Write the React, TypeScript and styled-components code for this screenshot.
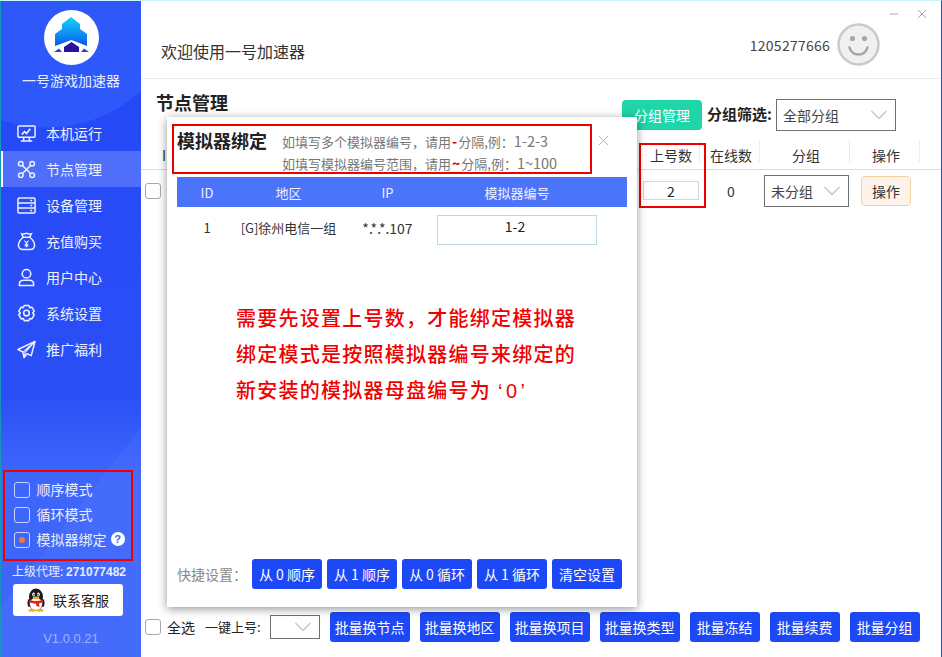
import React from "react";
import styled, { createGlobalStyle } from "styled-components";

const Global = createGlobalStyle`
  html, body { margin: 0; padding: 0; background: #fff; }
  * { box-sizing: border-box; }
  body { font-family: "Noto Sans CJK SC", "Liberation Sans", sans-serif; font-size: 14px; color: #333; }
`;

const Shell = styled.div`
  position: relative;
  width: 942px;
  height: 657px;
  overflow: hidden;
  display: flex;
  background: #fff;
  border-top: 1px solid #c9f5fb;
  border-right: 1px solid #2c5aa0;
`;

const Sidebar = styled.aside`
  width: 141px;
  flex: none;
  display: flex;
  flex-direction: column;
  align-items: center;
  color: #fff;
  border-left: 1px solid #1298b8;
  background:
    linear-gradient(128deg, transparent 0 72.5%, rgba(255,255,255,0.035) 72.6%),
    radial-gradient(circle at 46px -12px, #2f58fb 0 138px, transparent 139px),
    linear-gradient(180deg, #2447f6 0%, #2b4ff6 60%, #3e66fb 72%, #3e66fb 100%);
`;

const LogoCircle = styled.div`
  width: 55px;
  height: 55px;
  margin-top: 9px;
  border-radius: 50%;
  background: #fff;
  display: flex;
`;

const Brand = styled.div`
  margin-top: 5px;
  font-size: 14px;
  line-height: 20px;
  color: #e8edff;
`;

const Nav = styled.nav`
  width: 100%;
  margin-top: 25px;
  display: flex;
  flex-direction: column;
`;

const NavItem = styled.div<{ $active?: boolean }>`
  height: 36px;
  display: flex;
  align-items: center;
  gap: 10px;
  padding-left: ${(p) => (p.$active ? "14px" : "16px")};
  font-size: 14px;
  color: #eef1ff;
  background: ${(p) => (p.$active ? "#4f6ffb" : "transparent")};
  border-left: ${(p) => (p.$active ? "2px solid #fff" : "none")};
  svg { width: 19px; height: 19px; flex: none; }
`;

const ModeBox = styled.div`
  margin-top: auto;
  margin-left: -7px;
  width: 130px;
  height: 91px;
  border: 2px solid #ee0000;
  padding: 6px 0 0 9px;
  display: flex;
  flex-direction: column;
  gap: 3px;
`;

const ModeRow = styled.label`
  height: 22px;
  display: flex;
  align-items: center;
  gap: 7px;
  font-size: 14px;
  color: #eaeeff;
  white-space: nowrap;
  span:first-child { margin-top: 2px; }
`;

const ModeCheck = styled.span<{ $on?: boolean }>`
  width: 16px;
  height: 16px;
  border: 1px solid #c9d4ff;
  border-radius: 3px;
  display: flex;
  align-items: center;
  justify-content: center;
  &::after {
    content: "";
    display: ${(p) => (p.$on ? "block" : "none")};
    width: 6px;
    height: 6px;
    border-radius: 50%;
    background: #f7772a;
  }
`;

const Help = styled.span`
  width: 14px;
  height: 14px;
  margin-left: -3px;
  border-radius: 50%;
  background: #fff;
  color: #3e66fb;
  font: bold 11px/14px "Liberation Sans", sans-serif;
  text-align: center;
`;

const Agent = styled.div`
  margin-top: 0;
  margin-left: -4px;
  height: 20px;
  font-size: 12px;
  line-height: 20px;
  color: #e8edff;
  white-space: nowrap;
  b { font-family: "Liberation Sans", sans-serif; font-size: 12px; }
`;

const ServiceButton = styled.button`
  width: 110px;
  height: 32px;
  margin: 3px 0 0 -7px;
  border: none;
  border-radius: 3px;
  background: #fff;
  color: #222;
  font: 14px "Noto Sans CJK SC", sans-serif;
  display: flex;
  align-items: center;
  justify-content: center;
  gap: 7px;
  padding: 0;
`;

const Version = styled.div`
  margin: 15px 0 10px;
  font: 13px/16px "Liberation Sans", sans-serif;
  color: #9fb2fb;
`;

const Main = styled.main`
  flex: 1;
  min-width: 0;
  display: flex;
  flex-direction: column;
`;

const Header = styled.header`
  height: 78px;
  flex: none;
  border-bottom: 1px solid #ececec;
  display: flex;
  align-items: flex-start;
  padding-left: 20px;
`;

const Welcome = styled.div`
  margin-top: 39px;
  font-size: 16px;
  line-height: 22px;
  color: #333;
`;

const Account = styled.div`
  margin-left: auto;
  margin-top: 22px;
  display: flex;
  align-items: center;
  gap: 7px;
  font-size: 14px;
  color: #444;
  letter-spacing: 0.25px;
`;

const WindowControls = styled.div`
  width: 61px;
  margin-top: 8px;
  display: flex;
  gap: 18px;
  padding-left: 9px;
  svg { width: 10px; height: 10px; }
`;

const Toolbar = styled.div`
  height: 61px;
  flex: none;
  display: flex;
  align-items: flex-start;
  padding-left: 15px;
`;

const PageTitle = styled.h1`
  margin: 11px 0 0;
  font-size: 18px;
  line-height: 24px;
  font-weight: 700;
  color: #222;
`;

const GreenButton = styled.button`
  width: 80px;
  height: 30px;
  margin: 21px 0 0 auto;
  border: none;
  border-radius: 4px;
  background: #1ed6a8;
  color: #fff;
  font: 14px "Noto Sans CJK SC", sans-serif;
`;

const FilterLabel = styled.span`
  margin: 21px 4px 0 5px;
  font-size: 15px;
  line-height: 28px;
  font-weight: 700;
  color: #222;
  white-space: nowrap;
`;

const SelectBox = styled.div<{ $w: number; $h: number }>`
  width: ${(p) => p.$w}px;
  height: ${(p) => p.$h}px;
  border: 1px solid #707070;
  background: #fff;
  display: flex;
  align-items: center;
  justify-content: space-between;
  padding: 0 7px 0 6px;
  font-size: 14px;
  color: #444;
  flex: none;
  svg { width: 18px; height: 10px; margin-left: auto; }
`;

const FilterSelect = styled(SelectBox)`
  margin-top: 20px;
  margin-right: 45px;
`;

const TableGrid = styled.div`
  display: grid;
  grid-template-columns: 499px 60px 60px 90px 70px 1fr;
  align-items: center;
`;

const HeadRow = styled(TableGrid)`
  height: 30px;
  border-bottom: 1px solid #dcdcdc;
  align-items: stretch;
`;

const HeadCell = styled.div<{ $sep?: boolean; $start?: boolean }>`
  position: relative;
  display: flex;
  align-items: center;
  justify-content: ${(p) => (p.$start ? "flex-start" : "center")};
  padding-left: ${(p) => (p.$start ? "21px" : "2px")};
  font-size: 14px;
  color: #333;
  &::after {
    content: "";
    display: ${(p) => (p.$sep ? "block" : "none")};
    position: absolute;
    right: 0;
    top: 0;
    height: 22px;
    width: 1px;
    background: #ececec;
  }
`;

const BodyRow = styled(TableGrid)`
  height: 41px;
  position: relative;
`;

const RowStart = styled.div`
  padding-left: 4px;
  display: flex;
`;

const Check = styled.span`
  width: 16px;
  height: 16px;
  border: 1px solid #a8a8a8;
  border-radius: 3px;
  background: #fff;
  flex: none;
`;

const NumberInput = styled.div`
  width: 56px;
  height: 19px;
  margin: 0 auto 0 3px;
  border: 1px solid #c5dbe6;
  text-align: center;
  font-size: 14px;
  line-height: 18px;
  color: #222;
`;

const CellText = styled.div`
  text-align: center;
  font-size: 14px;
  color: #333;
  padding-left: 2px;
`;

const RowSelect = styled(SelectBox)`
  margin-left: 4px;
`;

const OpButton = styled.button`
  width: 50px;
  height: 30px;
  margin-left: 11px;
  border: 1px solid #f3cf9c;
  border-radius: 4px;
  background: #fdf3ea;
  color: #333;
  font: 14px "Noto Sans CJK SC", sans-serif;
  padding: 0;
`;

const CountMarker = styled.div`
  position: absolute;
  left: 639px;
  top: 142px;
  width: 67px;
  height: 65px;
  border: 2px solid #ee0000;
`;

const Footer = styled.div`
  margin-top: auto;
  height: 45px;
  flex: none;
  display: flex;
  align-items: flex-start;
  padding-left: 4px;
`;

const FooterLabel = styled.span<{ $gap: number; $size: number }>`
  margin-left: ${(p) => p.$gap}px;
  font-size: ${(p) => p.$size}px;
  line-height: 30px;
  color: #222;
  white-space: nowrap;
`;

const FooterCheck = styled(Check)`
  margin-top: 7px;
`;

const FooterSelect = styled(SelectBox)`
  margin: 3px 10px 0 9px;
  svg { margin-right: 0; }
`;

const BlueButton = styled.button<{ $w: number }>`
  width: ${(p) => p.$w}px;
  height: 30px;
  flex: none;
  border: none;
  border-radius: 3px;
  background: #1d48f5;
  color: #fff;
  font: 14px "Noto Sans CJK SC", sans-serif;
  white-space: nowrap;
  padding: 0;
`;

const BatchGroup = styled.div`
  display: flex;
  gap: 10px;
`;

const Modal = styled.section`
  position: absolute;
  left: 167px;
  top: 116px;
  width: 470px;
  height: 490px;
  background: #fff;
  box-shadow: 0 2px 9px rgba(0, 0, 0, 0.42);
  padding: 7px 10px 18px 5px;
  display: flex;
  flex-direction: column;
`;

const ModalHead = styled.div`
  position: relative;
  width: 420px;
  height: 50px;
  border: 2px solid #ee0000;
  display: flex;
  padding: 2px 0 0 3px;
`;

const ModalTitle = styled.h2`
  margin: 0;
  width: 105px;
  flex: none;
  font-size: 18px;
  line-height: 24px;
  font-weight: 700;
  color: #222;
`;

const HintBlock = styled.div`
  margin-top: 2px;
  font-size: 13px;
  line-height: 21px;
  color: #777;
  white-space: nowrap;
  b { color: #e60000; font-weight: 700; margin: 0 1px; font-size: 14px; }
`;

const HintNumber = styled.span`
  font-size: 14.500px;
`;

const CloseMark = styled.span`
  position: absolute;
  left: 424px;
  top: 9px;
  display: flex;
  svg { width: 11px; height: 11px; }
`;

const ModalGrid = styled.div`
  display: grid;
  grid-template-columns: 60px 103px 95px 1fr;
  margin-left: 5px;
  width: 450px;
  align-items: center;
  text-align: center;
`;

const ModalHeadRow = styled(ModalGrid)`
  height: 30px;
  margin-top: 3px;
  background: #4c74fb;
  color: #eef2ff;
  font-size: 13px;
  span:last-child { padding-right: 28px; }
`;

const ModalRow = styled(ModalGrid)`
  height: 38px;
  margin-top: 3px;
  font-size: 13px;
  color: #333;
  span { padding-bottom: 3px; }
`;

const IpText = styled.span`
  font-size: 14px;
`;

const BindInput = styled.div`
  width: 160px;
  height: 30px;
  margin: 2px 0 0 2px;
  border: 1px solid #bcd9e6;
  font-size: 14px;
  line-height: 20px;
  text-align: center;
  color: #222;
  padding-right: 4px;
`;

const Notice = styled.div`
  margin: 52px 0 0 64px;
  color: #f00000;
  font-size: 20px;
  font-weight: 500;
  line-height: 36px;
  letter-spacing: 1.250px;
  white-space: nowrap;
`;

const Quote = styled.span`
  font-family: "Liberation Sans", sans-serif;
  letter-spacing: 3.500px;
  margin-left: 7px;
`;

const Quick = styled.div`
  margin-top: auto;
  display: flex;
  align-items: center;
  gap: 5px;
  padding-left: 5px;
`;

const QuickLabel = styled.span`
  width: 70px;
  font-size: 14px;
  color: #888;
  white-space: nowrap;
`;

const Chevron = () => (
  <svg viewBox="0 0 18 10" fill="none" stroke="#c4c4c4" strokeWidth="1.3">
    <path d="M1.500 1 9 8.500 16.500 1" />
  </svg>
);

const Cross = ({ color }: { color: string }) => (
  <svg viewBox="0 0 12 12" fill="none" stroke={color} strokeWidth="1">
    <path d="M1 1 11 11M11 1 1 11" />
  </svg>
);

const Logo = () => (
  <svg viewBox="0 0 55 55" width="55" height="55">
    <defs>
      <linearGradient id="lg" x1="0" y1="0" x2="0" y2="1">
        <stop offset="0" stopColor="#14d4f5" />
        <stop offset="0.6" stopColor="#0f8cf5" />
        <stop offset="1" stopColor="#0a58e6" />
      </linearGradient>
    </defs>
    <path d="M27 7 36 14V19L43 24V36L27.500 30 11 36V24L18 19V14Z" fill="url(#lg)" />
    <path d="M27.500 32 35 37V42H20V37Z" fill="#2a129c" />
    <path d="M10 42 15 38.500 18 42ZM45 42 40 38.500 37 42Z" fill="#2c3fd8" />
  </svg>
);

const stroke = { fill: "none", stroke: "#eef1ff", strokeWidth: 1.6 } as const;

const IconMonitor = () => (
  <svg viewBox="0 0 20 20" {...stroke}>
    <rect x="1" y="2" width="18" height="12" rx="1" />
    <path d="M5 11l3-3 2 2 4-5" strokeWidth="1.800" />
    <path d="M7 14v3M13 14v3M4 18h12" />
  </svg>
);
const IconNodes = () => (
  <svg viewBox="0 0 20 20" {...stroke}>
    <circle cx="4" cy="4" r="2.400" />
    <circle cx="16" cy="4" r="2.400" />
    <circle cx="4" cy="16" r="2.400" />
    <circle cx="16" cy="16" r="2.400" />
    <path d="M6 6l8 8M14 6l-8 8" />
  </svg>
);
const IconServer = () => (
  <svg viewBox="0 0 20 20" {...stroke}>
    <rect x="1" y="2" width="18" height="16" rx="1.500" />
    <path d="M1 7.300h18M1 12.600h18" />
    <path d="M14 4.700h2M14 10h2M14 15.300h2" />
  </svg>
);
const IconBag = () => (
  <svg viewBox="0 0 20 20" {...stroke}>
    <path d="M6.500 5.500 5 2c2 .8 3.500-.6 5-.6s3 1.400 5 .6l-1.500 3.500" />
    <path d="M6.500 5.500h7c3 2.500 5 5.500 5 8.500 0 3-2 4.500-5 4.500h-7c-3 0-5-1.500-5-4.500 0-3 2-6 5-8.500z" />
    <path d="M7.800 9 10 11.500 12.200 9M10 11.500V16M8 12.800h4M8 14.600h4" strokeWidth="1.100" />
  </svg>
);
const IconUser = () => (
  <svg viewBox="0 0 20 20" {...stroke}>
    <circle cx="10" cy="6" r="4.500" />
    <path d="M2.500 18.500v-1.500c0-2.500 2-4 4.500-4h6c2.500 0 4.500 1.500 4.500 4v1.500z" />
  </svg>
);
const IconGear = () => (
  <svg viewBox="0 0 20 20" {...stroke}>
    <path d="M7.500 1.500h5l.8 2.300 2.300-.5 2.500 4.300-1.600 1.900 1.600 1.900-2.500 4.300-2.300-.5-.8 2.300h-5l-.8-2.300-2.300.5-2.500-4.300 1.600-1.900-1.600-1.900 2.500-4.300 2.300.5z" strokeLinejoin="round" />
    <circle cx="10" cy="9.500" r="3" />
  </svg>
);
const IconPlane = () => (
  <svg viewBox="0 0 20 20" {...stroke}>
    <path d="M19 1.500 1 10l5 2.500 1.500 6 3-4 4.500 2z" strokeLinejoin="round" />
    <path d="M19 1.500 6.500 12.500M7.500 18.500 8.500 13 19 1.500" strokeWidth="1.200" />
  </svg>
);

const Penguin = () => (
  <svg viewBox="0 0 20 24" width="20" height="24">
    <ellipse cx="3.500" cy="15" rx="2" ry="4" fill="#1a1a1a" />
    <ellipse cx="16.500" cy="15" rx="2" ry="4" fill="#1a1a1a" />
    <ellipse cx="10" cy="9" rx="7" ry="8.500" fill="#1a1a1a" />
    <ellipse cx="10" cy="16" rx="6.500" ry="6.500" fill="#fff" stroke="#1a1a1a" strokeWidth="0.500" />
    <ellipse cx="7.600" cy="6.500" rx="1.400" ry="2" fill="#fff" />
    <ellipse cx="12.400" cy="6.500" rx="1.400" ry="2" fill="#fff" />
    <circle cx="7.900" cy="6.800" r="0.700" fill="#111" />
    <circle cx="12.100" cy="6.800" r="0.700" fill="#111" />
    <ellipse cx="10" cy="9.800" rx="3.300" ry="1.400" fill="#f8b316" />
    <path d="M3.500 11.500c4 2 9 2 13 0l.5 2.500c-1.500.8-3 1.200-4 1.400l.5 3.600-3-1-.5-2.300c-2.300 0-4.500-.6-7-1.700z" fill="#e2231a" />
    <ellipse cx="6" cy="22.300" rx="3.500" ry="1.500" fill="#f8b316" />
    <ellipse cx="14" cy="22.300" rx="3.500" ry="1.500" fill="#f8b316" />
  </svg>
);

const Smile = () => (
  <svg viewBox="0 0 43 43" width="43" height="43">
    <circle cx="21.500" cy="21.500" r="20" fill="#f0f0f0" stroke="#c9c9c9" strokeWidth="2.500" />
    <circle cx="15.500" cy="15.500" r="2.600" fill="#a6a6a6" />
    <circle cx="27.500" cy="15.500" r="2.600" fill="#a6a6a6" />
    <path d="M12.500 24.500c1.500 5 5 7 9 7s7.500-2 9-7" fill="none" stroke="#a6a6a6" strokeWidth="2.600" strokeLinecap="round" />
  </svg>
);

const navItems: [string, React.ReactNode][] = [
  ["本机运行", <IconMonitor />],
  ["节点管理", <IconNodes />],
  ["设备管理", <IconServer />],
  ["充值购买", <IconBag />],
  ["用户中心", <IconUser />],
  ["系统设置", <IconGear />],
  ["推广福利", <IconPlane />],
];

const quickButtons = ["从 0 顺序", "从 1 顺序", "从 0 循环", "从 1 循环", "清空设置"];
const batchButtons: [string, number][] = [
  ["批量换节点", 80],
  ["批量换地区", 80],
  ["批量换项目", 80],
  ["批量换类型", 80],
  ["批量冻结", 70],
  ["批量续费", 70],
  ["批量分组", 70],
];

export default function App() {
  return (
    <Shell>
      <Global />
      <Sidebar>
        <LogoCircle>
          <Logo />
        </LogoCircle>
        <Brand>一号游戏加速器</Brand>
        <Nav>
          {navItems.map(([label, icon], i) => (
            <NavItem key={label} $active={i === 1}>
              {icon}
              {label}
            </NavItem>
          ))}
        </Nav>
        <ModeBox>
          <ModeRow>
            <ModeCheck />
            顺序模式
          </ModeRow>
          <ModeRow>
            <ModeCheck />
            循环模式
          </ModeRow>
          <ModeRow>
            <ModeCheck $on />
            模拟器绑定
            <Help>?</Help>
          </ModeRow>
        </ModeBox>
        <Agent>
          上级代理: <b>271077482</b>
        </Agent>
        <ServiceButton>
          <Penguin />
          联系客服
        </ServiceButton>
        <Version>V1.0.0.21</Version>
      </Sidebar>
      <Main>
        <Header>
          <Welcome>欢迎使用一号加速器</Welcome>
          <Account>
            1205277666
            <Smile />
          </Account>
          <WindowControls>
            <svg viewBox="0 0 12 12" fill="none" stroke="#999" strokeWidth="1">
              <path d="M1 6h10" />
            </svg>
            <Cross color="#999" />
          </WindowControls>
        </Header>
        <Toolbar>
          <PageTitle>节点管理</PageTitle>
          <GreenButton>分组管理</GreenButton>
          <FilterLabel>分组筛选:</FilterLabel>
          <FilterSelect $w={120} $h={32}>
            全部分组
            <Chevron />
          </FilterSelect>
        </Toolbar>
        <HeadRow>
          <HeadCell $sep $start>
            ID
          </HeadCell>
          <HeadCell $sep>上号数</HeadCell>
          <HeadCell $sep>在线数</HeadCell>
          <HeadCell $sep>分组</HeadCell>
          <HeadCell $sep>操作</HeadCell>
          <HeadCell />
        </HeadRow>
        <BodyRow>
          <RowStart>
            <Check />
          </RowStart>
          <NumberInput>2</NumberInput>
          <CellText>0</CellText>
          <RowSelect $w={85} $h={32}>
            未分组
            <Chevron />
          </RowSelect>
          <OpButton>操作</OpButton>
        </BodyRow>
        <Footer>
          <FooterCheck />
          <FooterLabel $gap={6} $size={14}>
            全选
          </FooterLabel>
          <FooterLabel $gap={10} $size={13}>
            一键上号:
          </FooterLabel>
          <FooterSelect $w={50} $h={24}>
            <Chevron />
          </FooterSelect>
          <BatchGroup>
            {batchButtons.map(([label, w]) => (
              <BlueButton key={label} $w={w}>
                {label}
              </BlueButton>
            ))}
          </BatchGroup>
        </Footer>
      </Main>
      <CountMarker />
      <Modal>
        <ModalHead>
          <ModalTitle>模拟器绑定</ModalTitle>
          <HintBlock>
            如填写多个模拟器编号，请用<b>-</b>分隔,例：<HintNumber>1-2-3</HintNumber>
            <br />
            如填写模拟器编号范围，请用<b>~</b>分隔,例：<HintNumber>1~100</HintNumber>
          </HintBlock>
          <CloseMark>
            <Cross color="#aaa" />
          </CloseMark>
        </ModalHead>
        <ModalHeadRow>
          <span>ID</span>
          <span>地区</span>
          <span>IP</span>
          <span>模拟器编号</span>
        </ModalHeadRow>
        <ModalRow>
          <span>1</span>
          <span>[G]徐州电信一组</span>
          <IpText>*.*.*.107</IpText>
          <BindInput>1-2</BindInput>
        </ModalRow>
        <Notice>
          需要先设置上号数，才能绑定模拟器
          <br />
          绑定模式是按照模拟器编号来绑定的
          <br />
          新安装的模拟器母盘编号为<Quote>‘0’</Quote>
        </Notice>
        <Quick>
          <QuickLabel>快捷设置：</QuickLabel>
          {quickButtons.map((label) => (
            <BlueButton key={label} $w={70}>
              {label}
            </BlueButton>
          ))}
        </Quick>
      </Modal>
    </Shell>
  );
}
